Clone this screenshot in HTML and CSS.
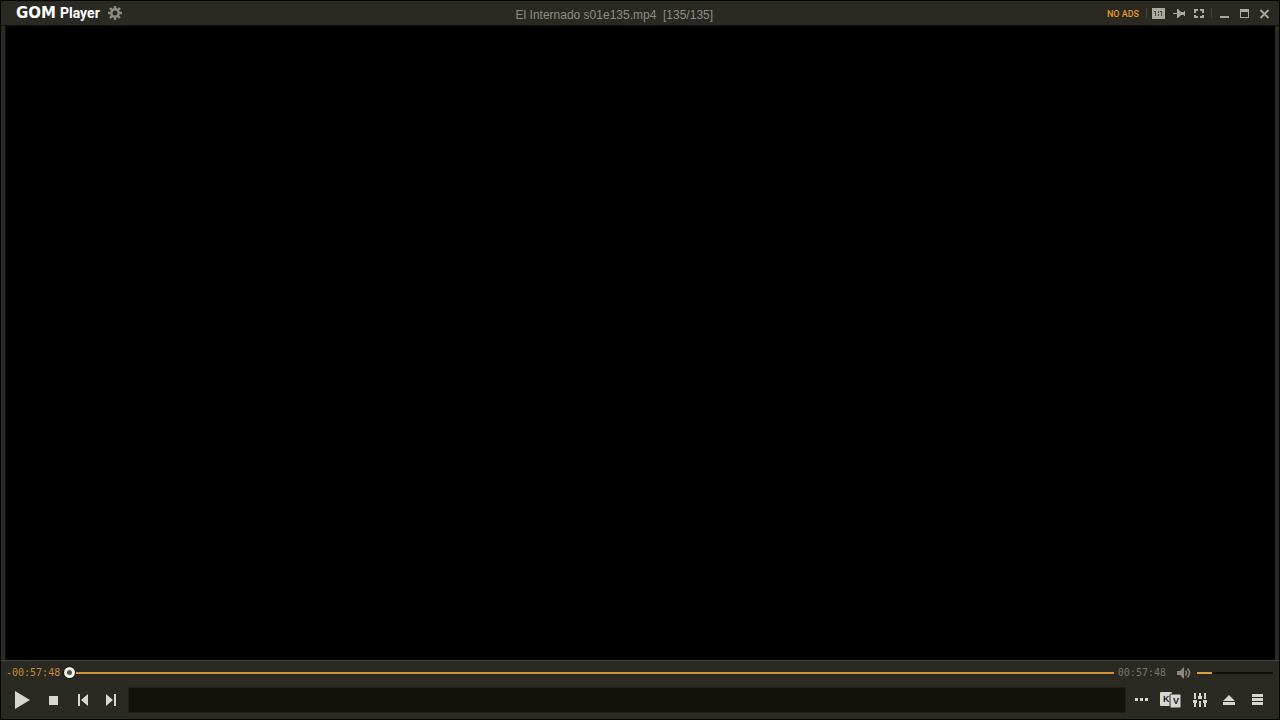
FILE: index.html
```html
<!DOCTYPE html>
<html lang="en">
<head>
  <meta charset="UTF-8" />
  <meta name="viewport" content="width=device-width, initial-scale=1.0"/>
  <title>GOM Player</title>
  <link rel="stylesheet" href="styles.css">
</head>
<body>
  <div class="player">
    <header class="titlebar">
      <div class="brand"><span class="brand-gom">GOM</span><span class="brand-player">Player</span></div>
      <button type="button" class="settings" aria-label="Settings">
        <svg width="14" height="14" viewBox="0 0 14 14">
          <circle cx="7" cy="7" r="3.7" fill="none" stroke="currentColor" stroke-width="2.4"/>
          <path d="M7 0v2.5M7 11.500v2.500M0 7h2.500M11.500 7h2.500M2 2l1.900 1.900M10.100 10.100l1.900 1.900M2 12l1.900-1.900M10.100 3.900l1.900-1.900" stroke="currentColor" stroke-width="2.4"/>
        </svg>
      </button>
      <h1 class="file-name">El Internado s01e135.mp4&nbsp; [135/135]</h1>
      <a href="#" class="no-ads">NO ADS</a>
      <span class="divider"></span>
      <button type="button" class="window-button" aria-label="Skin">
        <svg width="14" height="12" viewBox="0 0 14 12">
          <path fill="currentColor" d="M0 1h13v11H0z"/>
          <path fill="#4a483f" d="M3 4h1v5H3zM2 4h1v1H2zM6 4h1v2H6zM6 7h1v2H6zM9 4h1v5H9zM8 4h1v1H8z"/>
        </svg>
      </button>
      <button type="button" class="window-button" aria-label="Always on top">
        <svg width="14" height="12" viewBox="0 0 14 12">
          <path fill="currentColor" d="M1 6h4v1H1zM5 2h1l3 3h3V4h1v5h-1V8H9l-3 3H5z"/>
        </svg>
      </button>
      <button type="button" class="window-button" aria-label="Full screen">
        <svg width="12" height="12" viewBox="0 0 12 12">
          <path fill="currentColor" d="M1 2h4v2H3v2H1zM7 2h4v4H9V4H7zM1 8h2v1h2v2H1zM9 8h2v3H7V9h2z"/>
        </svg>
      </button>
      <span class="divider"></span>
      <button type="button" class="window-button" aria-label="Minimize">
        <svg width="12" height="12" viewBox="0 0 12 12"><path fill="currentColor" d="M2 9h9v2H2z"/></svg>
      </button>
      <button type="button" class="window-button" aria-label="Maximize">
        <svg width="12" height="12" viewBox="0 0 12 12"><path fill="currentColor" fill-rule="evenodd" d="M2 2h9v9H2zM3 5v5h7V5z"/></svg>
      </button>
      <button type="button" class="window-button" aria-label="Close">
        <svg width="12" height="12" viewBox="0 0 12 12"><path d="M2.500 3l8 8M10.500 3l-8 8" stroke="currentColor" stroke-width="1.800"/></svg>
      </button>
    </header>

    <main class="video"></main>

    <footer class="controls">
      <div class="seek-row">
        <span class="time time-left">-00:57:48</span>
        <input type="range" class="seek" min="0" max="3468" value="0" aria-label="Seek"/>
        <span class="time time-total">00:57:48</span>
        <button type="button" class="mute" aria-label="Mute">
          <svg width="14" height="12" viewBox="0 0 14 12">
            <path fill="currentColor" d="M0 4h3l4-4v12L3 8H0z"/>
            <path fill="none" stroke="currentColor" stroke-width="1.500" d="M8.500 3.500q2 2.500 0 5M10.500 1.500q4 4.500 0 9"/>
          </svg>
        </button>
        <input type="range" class="volume" min="0" max="100" value="20" aria-label="Volume"/>
      </div>
      <div class="button-row">
        <button type="button" class="play" aria-label="Play">
          <svg width="16" height="18" viewBox="0 0 16 18"><path fill="currentColor" d="M1 0l15 9-15 9z"/></svg>
        </button>
        <button type="button" aria-label="Stop">
          <svg width="10" height="10" viewBox="0 0 10 10"><path fill="currentColor" d="M1 1h9v9H1z"/></svg>
        </button>
        <button type="button" aria-label="Previous">
          <svg width="12" height="12" viewBox="0 0 12 12"><path fill="currentColor" d="M2 0h2v12H2zM12 0v12L5 6z"/></svg>
        </button>
        <button type="button" aria-label="Next">
          <svg width="12" height="12" viewBox="0 0 12 12"><path fill="currentColor" d="M9 0h2v12H9zM1 0v12l7-6z"/></svg>
        </button>
        <div class="status"></div>
        <button type="button" aria-label="More">
          <svg width="14" height="4" viewBox="0 0 14 4"><path fill="currentColor" d="M0 0h3v3H0zM5 0h3v3H5zM10 0h3v3h-3z"/></svg>
        </button>
        <button type="button" aria-label="Subtitles">
          <svg width="21" height="18" viewBox="0 0 21 18">
            <rect x="0" y="1" width="12" height="14" rx="1" fill="currentColor"/>
            <rect x="10" y="3" width="11" height="14" rx="1" fill="currentColor" stroke="#2b2923"/>
            <text x="3" y="11" class="key-letter">K</text>
            <text x="13" y="13" class="key-letter">V</text>
          </svg>
        </button>
        <button type="button" aria-label="Control panel">
          <svg width="14" height="16" viewBox="0 0 14 16">
            <path fill="currentColor" d="M1 1h2v6H1zM6 1h2v3h1v3H5V4h1zM11 1h2v6h-2zM0 8h4v3H3v4H1v-4H0zM6 9h2v6H6zM10 8h4v3h-1v4h-2v-4h-1z"/>
          </svg>
        </button>
        <button type="button" aria-label="Open file">
          <svg width="12" height="12" viewBox="0 0 12 12"><path fill="currentColor" d="M6 1l6 6H0zM0 8h12v3H0z"/></svg>
        </button>
        <button type="button" aria-label="Playlist">
          <svg width="12" height="12" viewBox="0 0 12 12"><path fill="currentColor" d="M0 0h11v3H0zM0 4h11v3H0zM0 8h11v3H0z"/></svg>
        </button>
      </div>
    </footer>
  </div>
</body>
</html>
```
FILE: styles.css
```css
* {
  box-sizing: border-box;
}

body {
  margin: 0;
  background-color: #000;
  color: #d8d6d0;
  font-family: "Liberation Sans", Arial, sans-serif;
}

button {
  display: flex;
  align-items: center;
  justify-content: center;
  flex: none;
  padding: 0;
  border: none;
  background: none;
  color: inherit;
  cursor: pointer;
}

.player {
  display: flex;
  flex-direction: column;
  min-height: 100vh;
  border: 1px solid #050504;
  background-color: #2a2922;
}

.titlebar {
  display: flex;
  align-items: center;
  height: 25px;
  padding: 0 5px 0 15px;
  border-bottom: 1px solid #11110e;
  background-color: #2a2922;
  color: #aaa89f;
}

.brand {
  display: flex;
  align-items: baseline;
  gap: 4px;
  color: #fff;
  line-height: 16px;
}

.brand-gom {
  font-family: "DejaVu Sans", sans-serif;
  font-size: 15px;
  font-weight: bold;
}

.brand-player {
  font-family: Roboto, sans-serif;
  font-size: 14px;
  font-weight: bold;
}

.settings {
  width: 14px;
  margin-left: 8px;
  color: #8f8d84;
}

.file-name {
  flex: 1;
  margin: 0;
  padding-top: 4px;
  color: #8d8c86;
  font-size: 12px;
  font-weight: normal;
  line-height: 16px;
  text-align: center;
}

.no-ads {
  padding-top: 2px;
  color: #e5962c;
  font-family: Roboto, sans-serif;
  font-size: 9px;
  font-weight: 500;
  line-height: 16px;
  text-decoration: none;
}

.divider {
  width: 1px;
  height: 10px;
  margin: 0 2px;
  background-color: #46443c;
}

.no-ads + .divider {
  margin-left: 7px;
}

.window-button {
  width: 20px;
  height: 20px;
}

.video {
  flex: 1;
  margin: 0 4px;
  border-left: 1px solid #11110e;
  background-color: #000;
}

.controls {
  padding: 2px 6px 4px 5px;
  border-top: 1px solid #45433d;
  background-color: #2a2922;
}

.seek-row {
  display: flex;
  align-items: center;
  height: 20px;
}

.time {
  font-family: "DejaVu Sans Mono", monospace;
  font-size: 10px;
  line-height: 16px;
}

.time-left {
  color: #c58b3b;
}

.time-total {
  margin-left: 4px;
  color: #77756e;
}

.seek,
.volume {
  appearance: none;
  height: 12px;
  margin: 0;
  background: none;
}

.seek {
  flex: 1;
  min-width: 0;
  margin-left: 4px;
}

.seek::-webkit-slider-runnable-track {
  height: 2px;
  background-color: #d0923c;
}

.seek::-webkit-slider-thumb {
  appearance: none;
  width: 11px;
  height: 11px;
  margin-top: -5px;
  border: 3px solid #f2f1ee;
  border-radius: 50%;
  background-color: #55534c;
  box-shadow: 0 0 0 1px #171612;
}

.mute {
  width: 14px;
  margin: 0 6px 0 11px;
  color: #8b8982;
}

.volume {
  width: 76px;
}

.volume::-webkit-slider-runnable-track {
  height: 2px;
  background: linear-gradient(to right, #d8a03e 20%, #11100d 20%);
}

.volume::-webkit-slider-thumb {
  appearance: none;
  width: 1px;
  height: 2px;
}

.button-row {
  display: flex;
  align-items: center;
  height: 32px;
  padding: 2px 1px 0 0;
}

.button-row button {
  width: 29px;
  height: 26px;
}

.button-row .play {
  width: 32px;
}

.key-letter {
  fill: #24231d;
  font-family: "Liberation Sans", Arial, sans-serif;
  font-size: 9px;
  font-weight: bold;
}

.status {
  flex: 1;
  height: 26px;
  margin: 0 1px 0 3px;
  border: 1px solid #1f1e18;
  background-color: #12110c;
}
```
